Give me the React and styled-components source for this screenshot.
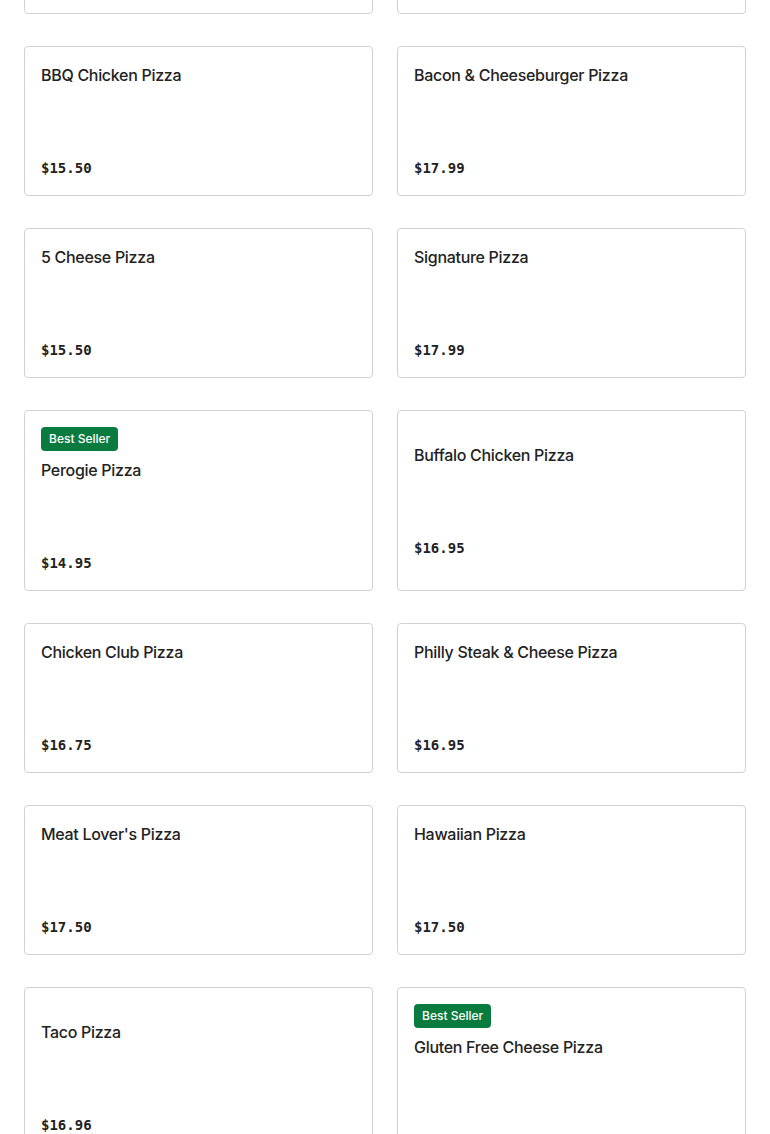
import React from 'react';
import styled, { createGlobalStyle } from 'styled-components';

const GlobalStyle = createGlobalStyle`
  body {
    margin: 0;
    background: #fff;
    font-family: Inter, "Noto Sans", sans-serif;
    color: #1f1f1f;
  }
`;

// the screenshot is scrolled part-way down the menu
const MenuGrid = styled.ul`
  list-style: none;
  margin: -136px 0 0;
  padding: 0 24px 24px;
  display: grid;
  grid-template-columns: 1fr 1fr;
  column-gap: 24px;
  row-gap: 32px;
`;

const Card = styled.li`
  display: flex;
  flex-direction: column;
  justify-content: center;
  padding: 16px;
  border: 1px solid #d2d2d2;
  border-radius: 4px;
  background: #fff;
`;

const Badge = styled.span`
  align-self: flex-start;
  height: 24px;
  line-height: 24px;
  padding: 0 8px;
  margin-bottom: 7px;
  border-radius: 4px;
  background: #0a7b3e;
  color: #fff;
  font-size: 12px;
  font-weight: 500;
`;

const Title = styled.h3`
  margin: 0;
  font-size: 16px;
  line-height: 24px;
  font-weight: 500;
  letter-spacing: -0.3px;
  color: #222;
`;

const Price = styled.span`
  margin-top: 70px;
  font-family: "DejaVu Sans Mono", "Liberation Mono", monospace;
  font-size: 14px;
  line-height: 22px;
  font-weight: 700;
  color: #222;
`;

const items = [
  { name: 'Pepperoni Pizza', price: '$14.50' },
  { name: 'Deluxe Pizza', price: '$17.50' },
  { name: 'BBQ Chicken Pizza', price: '$15.50' },
  { name: 'Bacon & Cheeseburger Pizza', price: '$17.99' },
  { name: '5 Cheese Pizza', price: '$15.50' },
  { name: 'Signature Pizza', price: '$17.99' },
  { name: 'Perogie Pizza', price: '$14.95', best: true },
  { name: 'Buffalo Chicken Pizza', price: '$16.95' },
  { name: 'Chicken Club Pizza', price: '$16.75' },
  { name: 'Philly Steak & Cheese Pizza', price: '$16.95' },
  { name: "Meat Lover's Pizza", price: '$17.50' },
  { name: 'Hawaiian Pizza', price: '$17.50' },
  { name: 'Taco Pizza', price: '$16.96' },
  { name: 'Gluten Free Cheese Pizza', price: '$15.99', best: true },
];

const App = () => (
  <>
    <GlobalStyle />
    <MenuGrid>
      {items.map(item => (
        <Card key={item.name}>
          {item.best && <Badge>Best Seller</Badge>}
          <Title>{item.name}</Title>
          <Price>{item.price}</Price>
        </Card>
      ))}
    </MenuGrid>
  </>
);

export default App;
